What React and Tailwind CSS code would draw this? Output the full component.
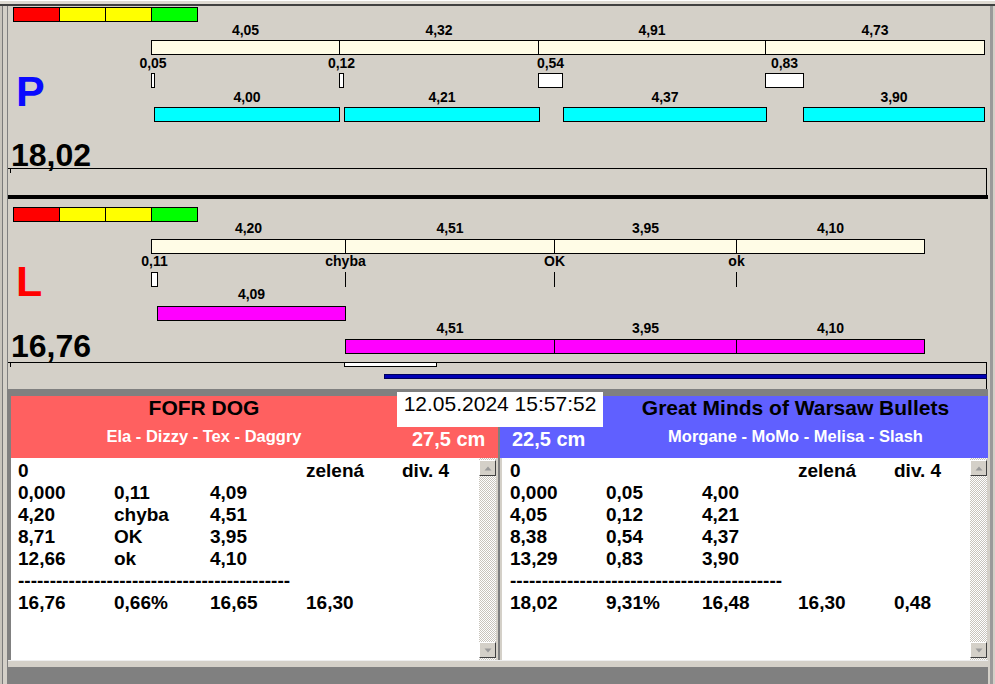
import React from "react";

const OX = 8;

const pCream = [[151, 339, "4,05"], [339, 538, "4,32"], [538, 765, "4,91"], [765, 984, "4,73"]];
const pReact = [[151, 154, "0,05"], [339, 343, "0,12"], [538, 562, "0,54"], [765, 803, "0,83"]];
const pCyan = [[154, 339, "4,00"], [344, 539, "4,21"], [563, 766, "4,37"], [803, 984, "3,90"]];

const lCream = [[151, 345, "4,20"], [345, 554, "4,51"], [554, 736, "3,95"], [736, 924, "4,10"]];
const lMarks = [[345, "chyba"], [554, "OK"], [736, "ok"]];
const lMag1 = [[157, 345, "4,09"]];
const lMag2 = [[345, 554, "4,51"], [554, 736, "3,95"], [736, 924, "4,10"]];

function Bar({ x1, x2, top, cls }) {
  return (
    <div
      className={"absolute h-[15px] border border-black " + cls}
      style={{ left: x1 - OX, width: x2 - x1 + 1, top }}
    />
  );
}

function Label({ x1, x2, top, text }) {
  return (
    <div
      className="absolute flex justify-center text-[14px] leading-[15px] font-bold text-black whitespace-nowrap"
      style={{ left: x1 - OX, width: x2 - x1 + 1, top }}
    >
      <span>{text}</span>
    </div>
  );
}

function ColorSegs() {
  return (
    <>
      <div className="w-[46px] h-[13px] bg-[#ff0000] border-r border-black" />
      <div className="w-[46px] h-[13px] bg-[#ffff00] border-r border-black" />
      <div className="w-[46px] h-[13px] bg-[#ffff00] border-r border-black" />
      <div className="w-[45px] h-[13px] bg-[#00ff00]" />
    </>
  );
}

function ChartP() {
  return (
    <div className="relative h-[189px] bg-[#d4d0c8]">
      <div className="absolute left-[5px] top-[1px] flex border border-black">
        <ColorSegs />
      </div>
      {pCream.map(([a, b, t]) => (
        <React.Fragment key={"c" + a}>
          <Label x1={a} x2={b} top={17} text={t} />
          <Bar x1={a} x2={b} top={34} cls="bg-[#fffce6]" />
        </React.Fragment>
      ))}
      {pReact.map(([a, b, t]) => (
        <React.Fragment key={"r" + a}>
          <Label x1={a} x2={b} top={50} text={t} />
          <Bar x1={a} x2={b} top={67} cls="bg-white" />
        </React.Fragment>
      ))}
      {pCyan.map(([a, b, t]) => (
        <React.Fragment key={"y" + a}>
          <Label x1={a} x2={b} top={84} text={t} />
          <Bar x1={a} x2={b} top={101} cls="bg-[#00ffff]" />
        </React.Fragment>
      ))}
      <div className="absolute left-[8px] top-[64px] text-[43px] leading-[43px] font-bold text-[#0a0aff]">P</div>
      <div className="absolute left-[3px] top-[133px] text-[32px] leading-[32px] font-bold text-black">18,02</div>
      <div className="absolute left-0 top-[162px] w-[979px] h-px bg-black" />
      <div className="absolute left-[2px] top-[162px] w-px h-[5px] bg-black" />
      <div className="absolute left-[978px] top-[162px] w-px h-[27px] bg-black" />
    </div>
  );
}

function ChartL() {
  return (
    <div className="relative h-[190px] bg-[#d4d0c8]">
      <div className="absolute left-[5px] top-[8px] flex border border-black">
        <ColorSegs />
      </div>
      {lCream.map(([a, b, t]) => (
        <React.Fragment key={"c" + a}>
          <Label x1={a} x2={b} top={22} text={t} />
          <Bar x1={a} x2={b} top={40} cls="bg-[#fffce6]" />
        </React.Fragment>
      ))}
      <Label x1={151} x2={157} top={55} text="0,11" />
      <Bar x1={151} x2={157} top={73} cls="bg-white" />
      {lMarks.map(([x, t]) => (
        <React.Fragment key={"m" + x}>
          <Label x1={x - 20} x2={x + 20} top={55} text={t} />
          <div className="absolute w-px h-[15px] bg-black" style={{ left: x - OX, top: 73 }} />
        </React.Fragment>
      ))}
      <div className="absolute left-[8px] top-[61px] text-[43px] leading-[43px] font-bold text-[#ff0000]">L</div>
      {lMag1.map(([a, b, t]) => (
        <React.Fragment key={"a" + a}>
          <Label x1={a} x2={b} top={88} text={t} />
          <Bar x1={a} x2={b} top={107} cls="bg-[#ff00ff]" />
        </React.Fragment>
      ))}
      {lMag2.map(([a, b, t]) => (
        <React.Fragment key={"b" + a}>
          <Label x1={a} x2={b} top={122} text={t} />
          <Bar x1={a} x2={b} top={140} cls="bg-[#ff00ff]" />
        </React.Fragment>
      ))}
      <div className="absolute left-[3px] top-[131px] text-[32px] leading-[32px] font-bold text-black">16,76</div>
      <div className="absolute left-0 top-[163px] w-[979px] h-px bg-black" />
      <div className="absolute left-[2px] top-[163px] w-px h-[5px] bg-black" />
      <div className="absolute left-[978px] top-[163px] w-px h-[27px] bg-black" />
      <div className="absolute left-[336px] top-[163px] w-[93px] h-[5px] bg-white border border-black" />
      <div className="absolute left-[376px] top-[175px] w-[603px] h-[5px] bg-[#0000b4] border border-[#00005a]" />
    </div>
  );
}

function ScrollBtn({ down }) {
  return (
    <div className="w-[17px] h-[16px] bg-[#d4d0c8] border border-t-white border-l-white border-r-[#404040] border-b-[#404040] flex items-center justify-center">
      <svg width="8" height="5" viewBox="0 0 8 5">
        {down ? (
          <polygon points="0.5,0.5 7.5,0.5 4,4.5" fill="#9a9a9a" />
        ) : (
          <polygon points="0.5,4.5 7.5,4.5 4,0.5" fill="#9a9a9a" />
        )}
      </svg>
    </div>
  );
}

function ScrollBar() {
  return (
    <div className="w-[17px] shrink-0 flex flex-col justify-between py-[2px] bg-[image:repeating-conic-gradient(#c8c4bc_0%_25%,#ffffff_0%_50%)] bg-[length:2px_2px]">
      <ScrollBtn />
      <ScrollBtn down />
    </div>
  );
}

function Table({ rows, total }) {
  return (
    <div className="text-[19px] leading-[22px] font-bold text-black">
      {rows.map((r, i) => (
        <div key={i} className="flex h-[22px] whitespace-pre">
          {r.map((c, j) => (
            <div key={j} className="w-[96px] shrink-0">{c}</div>
          ))}
        </div>
      ))}
      <div className="h-[22px] whitespace-pre">{"-".repeat(43)}</div>
      <div className="flex h-[22px] whitespace-pre">
        {total.map((c, j) => (
          <div key={j} className="w-[96px] shrink-0">{c}</div>
        ))}
      </div>
    </div>
  );
}

const leftRows = [
  ["0", "", "", "zelená", "div. 4"],
  ["0,000", "0,11", "4,09"],
  ["4,20", "chyba", "4,51"],
  ["8,71", "OK", "3,95"],
  ["12,66", "ok", "4,10"],
];
const leftTotal = ["16,76", "0,66%", "16,65", "16,30"];
const rightRows = [
  ["0", "", "", "zelená", "div. 4"],
  ["0,000", "0,05", "4,00"],
  ["4,05", "0,12", "4,21"],
  ["8,38", "0,54", "4,37"],
  ["13,29", "0,83", "3,90"],
];
const rightTotal = ["18,02", "9,31%", "16,48", "16,30", "0,48"];

function Bottom() {
  return (
    <div className="relative flex h-[264px] bg-[#808080]">
      <div className="w-[3px] shrink-0" />
      <div className="w-[487px] shrink-0 flex flex-col">
        <div className="h-[62px] bg-[#ff6060] flex">
          <div className="w-[386px] flex flex-col items-center">
            <div className="text-[21px] leading-[24px] font-bold text-black">FOFR DOG</div>
            <div className="mt-[6px] text-[16.5px] leading-[20px] font-bold text-white">Ela - Dizzy - Tex - Daggry</div>
          </div>
          <div className="flex-1 pt-[31px] pl-[15px] text-[20px] leading-[24px] font-bold text-white whitespace-nowrap">27,5 cm</div>
        </div>
        <div className="flex-1 flex min-h-0">
          <div className="flex-1 min-w-0 overflow-hidden bg-white pt-[2px] pl-[7px]">
            <Table rows={leftRows} total={leftTotal} />
          </div>
          <ScrollBar />
          <div className="w-[2px] shrink-0 bg-[#d4d0c8]" />
        </div>
      </div>
      <div className="w-[2px] shrink-0" />
      <div className="w-[488px] shrink-0 flex flex-col">
        <div className="h-[62px] bg-[#6060ff] flex">
          <div className="w-[103px] pt-[31px] pl-[12px] text-[20px] leading-[24px] font-bold text-white whitespace-nowrap">22,5 cm</div>
          <div className="flex-1 flex flex-col items-center">
            <div className="text-[21px] leading-[24px] font-bold text-black whitespace-nowrap">Great Minds of Warsaw Bullets</div>
            <div className="mt-[6px] text-[16.5px] leading-[20px] font-bold text-white whitespace-nowrap">Morgane - MoMo - Melisa - Slash</div>
          </div>
        </div>
        <div className="flex-1 flex min-h-0">
          <div className="w-[2px] shrink-0 bg-[#d4d0c8]" />
          <div className="flex-1 min-w-0 overflow-hidden bg-white pt-[2px] pl-[8px]">
            <Table rows={rightRows} total={rightTotal} />
          </div>
          <ScrollBar />
          <div className="w-[1px] shrink-0 bg-[#d4d0c8]" />
        </div>
      </div>
      <div className="absolute left-[389px] top-[-4px] w-[206px] h-[35px] bg-white text-center text-[21px] leading-[24px] text-black whitespace-nowrap">
        12.05.2024 15:57:52
      </div>
    </div>
  );
}

export default function App() {
  return (
    <div className="w-[995px] h-[684px] overflow-hidden bg-[#d4d0c8] flex flex-col font-['Liberation_Sans',Arial,sans-serif]">
      <div className="h-[4px] bg-[#dedad2] border-t border-white" />
      <div className="h-[2px] bg-[#404040]" />
      <div className="flex flex-1">
        <div className="w-[8px] flex">
          <div className="w-[2px] bg-[#c8c4bc]" />
          <div className="w-[1px] bg-[#7a7a7a]" />
          <div className="w-[4px] bg-[#d4d0c8]" />
          <div className="w-[1px] bg-[#808080]" />
        </div>
        <div className="w-[980px] flex flex-col">
          <ChartP />
          <div className="h-[4px] bg-black" />
          <ChartL />
          <div className="h-[7px] bg-[#808080]" />
          <Bottom />
          <div className="h-[7px] bg-[#d4d0c8] border-t border-[#eeeeee]" />
          <div className="h-[17px] bg-[#808080]" />
        </div>
        <div className="w-[7px] flex">
          <div className="w-[2px] bg-[#d4d0c8]" />
          <div className="w-[3px] bg-[#9a9a9a]" />
          <div className="w-[2px] bg-[#d4d0c8]" />
        </div>
      </div>
    </div>
  );
}
